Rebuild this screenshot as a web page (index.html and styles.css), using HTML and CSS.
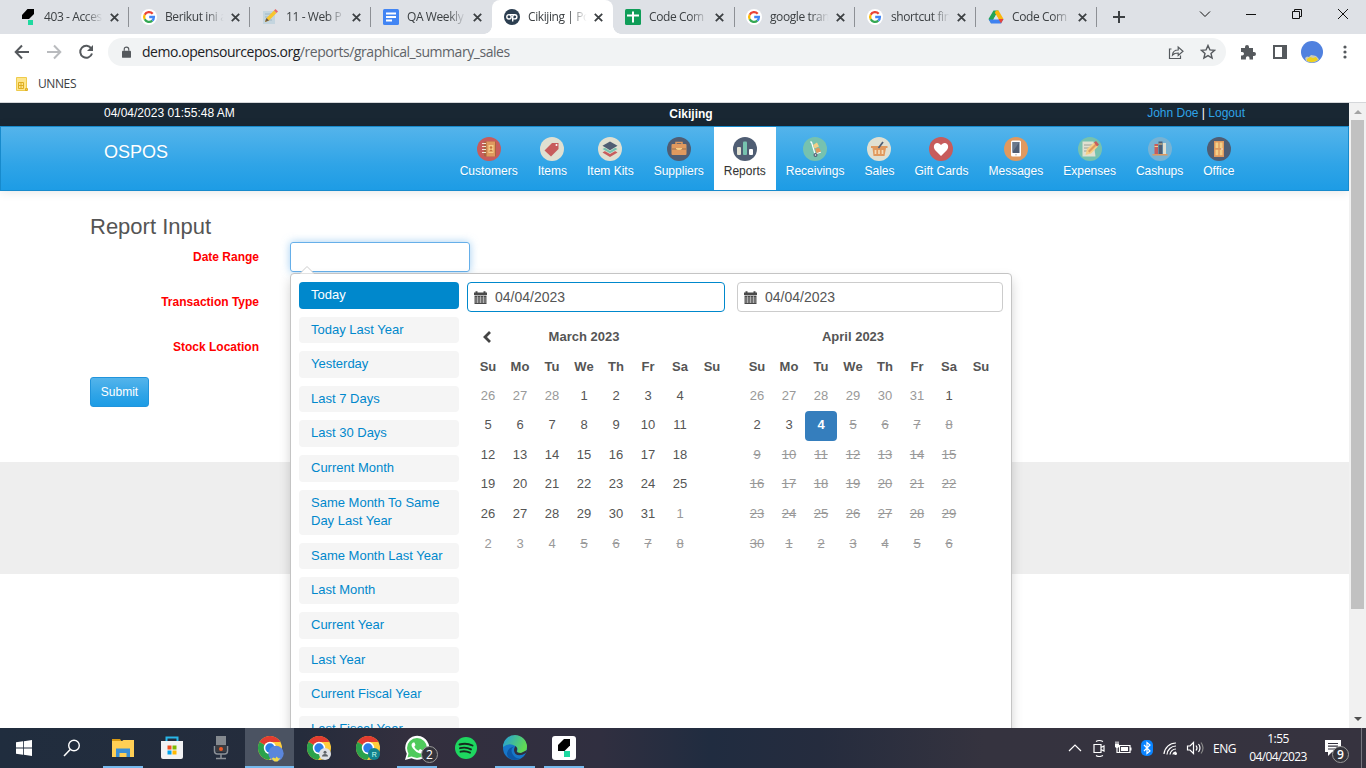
FILE: index.html
```html
<!DOCTYPE html>
<html lang="en">
<head>
<meta charset="utf-8">
<title>Cikijing | Powered by OSPOS</title>
<link rel="stylesheet" href="styles.css">
</head>
<body>
<svg class="defs" width="0" height="0">
  <symbol id="x" viewBox="0 0 9 9"><path d="M.8.8l7.4 7.4M8.200.8L.8 8.200" stroke="#3c4043" stroke-width="1.800"/></symbol>
  <symbol id="google" viewBox="0 0 16 16"><circle cx="8" cy="8" r="8" fill="#fff"/><g fill="none" stroke-width="2.3"><path d="M11.7 4.7A4.9 4.9 0 0 0 3.7 5.7" stroke="#ea4335"/><path d="M3.7 5.7a4.9 4.9 0 0 0 0 4.6" stroke="#fbbc05"/><path d="M3.7 10.3a4.9 4.9 0 0 0 7.6 1.4" stroke="#34a853"/><path d="M11.3 11.7A4.9 4.9 0 0 0 12.9 8H8.2" stroke="#4285f4"/></g></symbol>
  <symbol id="mark" viewBox="0 0 16 16"><path d="M7.500 0H14v5L9 10H2V6z" fill="#000"/><path d="M8 11h5v5H8z" fill="#1fd9a0"/></symbol>
  <symbol id="chrome" viewBox="0 0 24 24"><circle cx="12" cy="12" r="12" fill="#ffcd3c"/><path d="M12 12L1.600 6A12 12 0 0 1 22.400 6H12z" fill="#e23c30"/><path d="M1.600 6A12 12 0 0 0 11 24l6-9-5-3z" fill="#2ba24c"/><circle cx="12" cy="12" r="6.200" fill="#fff"/><circle cx="12" cy="12" r="4.700" fill="#2b7de9"/></symbol>
  <symbol id="cal" viewBox="0 0 13 13"><path d="M0 4V1.500h1.500V.3h2v1.200h6V.3h2v1.200H13V4z" fill="#4a4a4a"/><path d="M.5 4.600h12V13H.5z" fill="#4a4a4a"/><path d="M.5 7h12M.5 9h12M.5 11h12M3.500 5v7M6.500 5v7M9.500 5v7" stroke="#fff" stroke-width=".45"/></symbol>
</svg>

<header class="browser">
  <div class="tabs">
    <div class="tab"><svg class="fav"><use href="#mark"/></svg><span class="title">403 - Acces</span><svg class="close"><use href="#x"/></svg></div>
    <div class="tab"><svg class="fav"><use href="#google"/></svg><span class="title">Berikut ini a</span><svg class="close"><use href="#x"/></svg></div>
    <div class="tab"><svg class="fav" viewBox="0 0 16 16"><path d="M1 2h12v13H1z" fill="#c4d5df"/><path d="M3 5h7M3 8h6M3 11h7" stroke="#9db6c5"/><path d="M3 13l1.500-4L12 1.500l2.500 2.500L7 11.500z" fill="#f7c52e"/><path d="M12 1.500L13.500 0 16 2.500 14.500 4z" fill="#e6696b"/><path d="M3 13l1.500-4L7 11.500z" fill="#6c5944"/></svg><span class="title">11 - Web P</span><svg class="close"><use href="#x"/></svg></div>
    <div class="tab no-line"><svg class="fav" viewBox="0 0 16 16"><rect width="16" height="16" rx="1.500" fill="#4285f4"/><path d="M3 4.500h10M3 8h10M3 11.500h6" stroke="#fff" stroke-width="1.800"/></svg><span class="title">QA Weekly</span><svg class="close"><use href="#x"/></svg></div>
    <div class="tab active"><svg class="fav" viewBox="0 0 16 16"><circle cx="8" cy="8" r="8" fill="#2c3e50"/><g fill="none" stroke="#fff" stroke-width="1.400"><circle cx="5" cy="7.800" r="2.200"/><path d="M5.500 5.600h5M8.700 12.500V7.600a2.100 2.100 0 1 1 2.100 2.300H8.700"/></g></svg><span class="title">Cikijing | Po</span><svg class="close"><use href="#x"/></svg></div>
    <div class="tab no-line"><svg class="fav" viewBox="0 0 16 16"><rect width="16" height="16" rx="1.500" fill="#0f9d58"/><path d="M2 6.500h12M8 2.500v11" stroke="#fff" stroke-width="2"/></svg><span class="title">Code Com</span><svg class="close"><use href="#x"/></svg></div>
    <div class="tab left-line"><svg class="fav"><use href="#google"/></svg><span class="title">google tran</span><svg class="close"><use href="#x"/></svg></div>
    <div class="tab"><svg class="fav"><use href="#google"/></svg><span class="title">shortcut fin</span><svg class="close"><use href="#x"/></svg></div>
    <div class="tab"><svg class="fav" viewBox="0 0 16 16"><path d="M5.500 1.500h5L8 5.800 3.200 14.300.5 10z" fill="#23a455"/><path d="M10.500 1.500l5 8.500h-5L6.800 3.700 8 1.500z" fill="#fbb60b"/><path d="M3 14.500L.7 10.500H10l5.500-.5-2.500 4.500z" fill="#3f82f0"/><path d="M8 6l2.300 4H5.700z" fill="#dee1e6"/><path d="M10.500 10h5L13 14.500z" fill="#e8453c"/></svg><span class="title">Code Com</span><svg class="close"><use href="#x"/></svg></div>
    <svg class="plus" viewBox="0 0 12 12"><path d="M6 0v12M0 6h12" stroke="#3c4043" stroke-width="2"/></svg>
    <div class="window-buttons">
      <svg viewBox="0 0 12 12"><path d="M1 3.500l5 5 5-5" /></svg>
      <svg viewBox="0 0 12 12"><path d="M1 6.500h10"/></svg>
      <svg viewBox="0 0 12 12"><path d="M1.500 3.500h7v7h-7zM3.500 3.500v-2h7v7h-2"/></svg>
      <svg viewBox="0 0 12 12"><path d="M1 1l10 10M11 1L1 11"/></svg>
    </div>
  </div>
  <div class="toolbar">
    <svg viewBox="0 0 16 16"><path d="M15 8H2M8 1.500L1.700 8 8 14.500" fill="none" stroke="#55595d" stroke-width="2"/></svg>
    <svg viewBox="0 0 16 16"><path d="M1 8h13M8 1.500L14.300 8 8 14.500" fill="none" stroke="#b9bbbe" stroke-width="2"/></svg>
    <svg viewBox="0 0 16 16"><path d="M13.300 4.500A6 6 0 1 0 14 9.500" fill="none" stroke="#55595d" stroke-width="2"/><path d="M15 1v6H9z" fill="#55595d"/></svg>
    <div class="address">
      <svg class="lock" viewBox="0 0 10 13"><path d="M1 5h8q1 0 1 1v6q0 1-1 1H1q-1 0-1-1V6q0-1 1-1z" fill="#55595d"/><path d="M2.500 5V3.500a2.500 2.500 0 0 1 5 0V5" fill="none" stroke="#55595d" stroke-width="1.300"/></svg>
      <span class="url"><b>demo.opensourcepos.org</b>/reports/graphical_summary_sales</span>
      <svg class="share" viewBox="0 0 16 16"><path d="M3.500 5H1.500v9.500h11v-3M4.500 11c.3-3.500 2.500-5 5.700-5V3L15 7.300l-4.800 4.200V9C7.700 9 6 9.300 4.500 11z" fill="none" stroke="#55595d" stroke-width="1.200"/></svg>
      <svg class="star" viewBox="0 0 16 16"><path d="M8 1.500l1.900 4.400 4.700.4-3.600 3.100 1.100 4.700L8 11.600l-4.100 2.500L5 9.400 1.400 6.300l4.700-.4z" fill="none" stroke="#55595d" stroke-width="1.400"/></svg>
    </div>
    <svg class="ext" viewBox="0 0 16 16"><path d="M1 4h4V3a2 2 0 0 1 4 0v1h4v4h1a2 2 0 0 1 0 4h-1v3.500H9.500V14a1.800 1.800 0 0 0-3.600 0v1.500H1V11.500h1.200a1.800 1.800 0 0 0 0-3.600H1z" fill="#55595d"/></svg>
    <svg class="side" viewBox="0 0 14 14"><path d="M1 1h12v12H1z" fill="none" stroke="#55595d" stroke-width="2"/><path d="M9 1h4v12H9z" fill="#55595d"/></svg>
    <svg class="avatar" viewBox="0 0 22 22"><circle cx="11" cy="11" r="11" fill="#5081df"/><path d="M4 17l2-1.500 2 .5 2-2 3 .5 2 .5 2 2 1 1.500A11 11 0 0 1 5 20z" fill="#c9cbb8"/><path d="M6 18l3-2 3 1 3-1 2 3a11 11 0 0 1-11 1z" fill="#efd21b"/></svg>
    <svg class="dots" viewBox="0 0 4 14"><g fill="#55595d"><circle cx="2" cy="2" r="1.600"/><circle cx="2" cy="7" r="1.600"/><circle cx="2" cy="12" r="1.600"/></g></svg>
  </div>
  <div class="bookmarks"><svg viewBox="0 0 12 14"><path d="M.5.500h10v13H.5z" fill="#fde58c" stroke="#eecb4c"/><path d="M2.500 5.500h5v6h-5zM5 5.500v6M2.500 8.500h5M9.500 11.500h2v2h-2z" fill="none" stroke="#dfae22"/></svg><span>UNNES</span></div>
</header>

<main class="viewport">
  <div class="page">
    <div class="topbar">
      <span>04/04/2023 01:55:48 AM</span><strong>Cikijing</strong><span class="user"><a>John Doe</a> | <a>Logout</a></span>
    </div>
    <nav class="navbar">
      <span class="brand">OSPOS</span>
      <div class="menu">
        <a><svg viewBox="0 0 24 24"><circle cx="12" cy="12" r="12" fill="#c75c5c"/><rect x="7" y="4.500" width="12" height="15" rx="1" fill="#a8663e"/><path d="M9.500 4.500H18v15H9.500z" fill="#e0995e"/><path d="M5 6.500h4M5 9.500h4M5 12.500h4M5 15.500h4" stroke="#f1e3d2"/><rect x="11.500" y="8" width="5" height="8" fill="#f5cf87"/><circle cx="14" cy="10.500" r="1.300" fill="#c7753f"/><path d="M12 14.500q2-4 4 0z" fill="#c7753f"/></svg>Customers</a>
        <a><svg viewBox="0 0 24 24"><circle cx="12" cy="12" r="12" fill="#e0e0d1"/><path d="M4.500 13.500L12 6h6.500v6L11 19.500z" fill="#c75c5c"/><circle cx="16.500" cy="8" r="1" fill="#fff"/></svg>Items</a>
        <a><svg viewBox="0 0 24 24"><circle cx="12" cy="12" r="12" fill="#e0e0d1"/><path d="M4.500 15.500L12 11l7.500 4.500L12 20z" fill="#c75c5c"/><path d="M4 12.500l8-4 8 4-8 4.500z" fill="#e0e0d1"/><path d="M4.500 12L12 8l7.500 4-7.500 4.300z" fill="#76c2af"/><path d="M4 9l8-4.500L20 9l-8 5z" fill="#e0e0d1"/><path d="M4.500 8.700L12 4.500l7.500 4.200L12 13.300z" fill="#4f5d73"/></svg>Item Kits</a>
        <a><svg viewBox="0 0 24 24"><circle cx="12" cy="12" r="12" fill="#4f5d73"/><path d="M9 8V5.500h6V8" fill="none" stroke="#e0995e" stroke-width="1.500"/><rect x="4.500" y="7" width="15" height="11" rx="1" fill="#e0995e"/><path d="M5 12h5M14 12h5" stroke="#9b704f"/><path d="M9 11h6v1q-3 2-6 0z" fill="#f5cf87"/></svg>Suppliers</a>
        <a class="current"><svg viewBox="0 0 24 24"><circle cx="12" cy="12" r="12" fill="#4f5d73"/><rect x="4" y="10" width="4" height="8" rx="1" fill="#e0e0d1"/><rect x="10" y="4.500" width="4" height="13.500" rx="1" fill="#76c2af"/><rect x="16" y="12" width="4" height="6" rx="1" fill="#fff"/></svg>Reports</a>
        <a><svg viewBox="0 0 24 24"><circle cx="12" cy="12" r="12" fill="#76c2af"/><path d="M7 5h1.500l3.500 12 6-2" fill="none" stroke="#fff" stroke-width="1.200"/><path d="M10 8l4-2.500 2 4-4.500 2z" fill="#f5cf87"/><path d="M12 12l4-1.500 2 4-4.500 1.500z" fill="#e0995e"/><circle cx="12.500" cy="18" r="2" fill="#4f5d73"/><circle cx="12.500" cy="18" r=".8" fill="#fff"/></svg>Receivings</a>
        <a><svg viewBox="0 0 24 24"><circle cx="12" cy="12" r="12" fill="#e0e0d1"/><path d="M4 9h16.500v2H19l-1.500 8h-11L5.500 11H4z" fill="#e0995e"/><path d="M8.500 13v4M12 13v4M15.500 13v4" stroke="#f5ddb8" stroke-width="1.700"/><path d="M16 5l-4.500 6" stroke="#4f5d73" stroke-width="1.700"/></svg>Sales</a>
        <a><svg viewBox="0 0 24 24"><circle cx="12" cy="12" r="12" fill="#c75c5c"/><path d="M12 19L6 13q-2-3-.5-5.500Q8.500 4.500 12 8q3.500-3.500 6.500-.5Q20 10 18 13z" fill="#fff"/></svg>Gift Cards</a>
        <a><svg viewBox="0 0 24 24"><circle cx="12" cy="12" r="12" fill="#e0995e"/><rect x="7" y="3.500" width="10" height="16" rx="1.500" fill="#fff"/><path d="M8.500 5h7v11h-7z" fill="#4f5d73"/><path d="M8.500 5h7l-7 10z" fill="#6b788b"/><circle cx="12" cy="17.800" r=".7" fill="#aaa"/></svg>Messages</a>
        <a><svg viewBox="0 0 24 24"><circle cx="12" cy="12" r="12" fill="#76c2af"/><path d="M4.500 4.500h11l2 15h-13z" fill="#e0e0d1"/><path d="M6 8h8M6 11h7M6 14h5" stroke="#8b9388" stroke-width=".8"/><path d="M7.500 18l1.500-6 7-6.500 4 4-7 7z" fill="#f5cf87"/><path d="M10 14l7.500-7.500 1.500 1.500-7.500 7.500z" fill="#e0995e"/><path d="M16 5.500l2-1.500 3 3.500-2 2z" fill="#c75c5c"/></svg>Expenses</a>
        <a><svg viewBox="0 0 24 24"><circle cx="12" cy="12" r="12" fill="#77b3d4"/><path d="M4.500 17h15v1.500h-15z" fill="#e0995e"/><path d="M6.500 7H10v10H6.500z" fill="#c75c5c"/><path d="M10.500 4.500h4V17h-4z" fill="#4f5d73"/><path d="M15 6h3v11h-3z" fill="#e0e0d1"/><path d="M6.500 9.500H10M10.500 7h4" stroke="#f5cf87"/></svg>Cashups</a>
        <a><svg viewBox="0 0 24 24"><circle cx="12" cy="12" r="12" fill="#4f5d73"/><path d="M7 4h10v16H7z" fill="#e0995e"/><path d="M8.500 5.500h2.800v5.500H8.500zM12.700 5.500h2.800v5.500h-2.800zM8.500 12.700h2.800v5.500H8.500zM12.700 12.700h2.800v5.500h-2.800z" fill="#f5cf87"/><circle cx="15" cy="12" r=".8" fill="#fff"/></svg>Office</a>
      </div>
    </nav>
    <section class="content">
      <h1>Report Input</h1>
      <div class="row"><label>Date Range</label><div class="field focus"></div></div>
      <div class="row"><label>Transaction Type</label><div class="field"></div></div>
      <div class="row"><label>Stock Location</label><div class="field"></div></div>
      <button class="submit">Submit</button>
    </section>
    <div class="footer"></div>

    <div class="picker">
      <svg class="arrow" viewBox="0 0 14 8"><path d="M0 7.500L7 .5l7 7z" fill="#fff"/><path d="M0 7.500L7 .5l7 7" fill="none" stroke="#ccc"/></svg>
      <ul class="ranges">
        <li class="on">Today</li><li>Today Last Year</li><li>Yesterday</li><li>Last 7 Days</li><li>Last 30 Days</li><li>Current Month</li><li>Same Month To Same Day Last Year</li><li>Same Month Last Year</li><li>Last Month</li><li>Current Year</li><li>Last Year</li><li>Current Fiscal Year</li><li>Last Fiscal Year</li>
      </ul>
      <div class="calendar first">
        <div class="date on"><svg><use href="#cal"/></svg>04/04/2023</div>
        <div class="month">
          <div class="week head"><span><svg class="prev" viewBox="0 0 10 12"><path d="M8 1L3 6l5 5" fill="none" stroke="#444" stroke-width="2.800"/></svg></span><span class="name">March 2023</span></div>
          <div class="week head"><span>Su</span><span>Mo</span><span>Tu</span><span>We</span><span>Th</span><span>Fr</span><span>Sa</span><span>Su</span></div>
          <div class="week"><i>26</i><i>27</i><i>28</i><span>1</span><span>2</span><span>3</span><span>4</span></div>
          <div class="week"><span>5</span><span>6</span><span>7</span><span>8</span><span>9</span><span>10</span><span>11</span></div>
          <div class="week"><span>12</span><span>13</span><span>14</span><span>15</span><span>16</span><span>17</span><span>18</span></div>
          <div class="week"><span>19</span><span>20</span><span>21</span><span>22</span><span>23</span><span>24</span><span>25</span></div>
          <div class="week"><span>26</span><span>27</span><span>28</span><span>29</span><span>30</span><span>31</span><i>1</i></div>
          <div class="week"><i>2</i><i>3</i><i>4</i><s>5</s><s>6</s><s>7</s><s>8</s></div>
        </div>
      </div>
      <div class="calendar">
        <div class="date"><svg><use href="#cal"/></svg>04/04/2023</div>
        <div class="month">
          <div class="week head"><span></span><span class="name">April 2023</span></div>
          <div class="week head"><span>Su</span><span>Mo</span><span>Tu</span><span>We</span><span>Th</span><span>Fr</span><span>Sa</span><span>Su</span></div>
          <div class="week"><i>26</i><i>27</i><i>28</i><i>29</i><i>30</i><i>31</i><span>1</span></div>
          <div class="week"><span>2</span><span>3</span><b>4</b><s>5</s><s>6</s><s>7</s><s>8</s></div>
          <div class="week"><s>9</s><s>10</s><s>11</s><s>12</s><s>13</s><s>14</s><s>15</s></div>
          <div class="week"><s>16</s><s>17</s><s>18</s><s>19</s><s>20</s><s>21</s><s>22</s></div>
          <div class="week"><s>23</s><s>24</s><s>25</s><s>26</s><s>27</s><s>28</s><s>29</s></div>
          <div class="week"><s>30</s><s>1</s><s>2</s><s>3</s><s>4</s><s>5</s><s>6</s></div>
        </div>
      </div>
    </div>
  </div>
  <div class="scrollbar"><svg viewBox="0 0 8 4"><path d="M0 4l4-4 4 4z" fill="#a3a3a3"/></svg><div class="thumb"></div><svg viewBox="0 0 8 4"><path d="M0 0h8L4 4z" fill="#505050"/></svg></div>
</main>

<footer class="taskbar">
  <div class="start"><svg viewBox="0 0 16 16" width="16" height="16"><path d="M0 2.300L7 1.300v6.300H0zM7.800 1.200L16 0v7.600H7.800zM0 8.400h7v6.300l-7-1zM7.800 8.400H16V16l-8.200-1.200z" fill="#fff"/></svg></div>
  <div class="start"><svg viewBox="0 0 18 18" width="18" height="18"><circle cx="11" cy="6.500" r="5.300" fill="none" stroke="#fff" stroke-width="1.400"/><path d="M7.200 10.500L1 17" stroke="#fff" stroke-width="1.500"/></svg></div>
  <div class="apps">
    <div class="open"><svg viewBox="0 0 24 24"><path d="M1 3h8l1.500 2H1z" fill="#d89a13"/><path d="M1 5h10l1.500-1H23v17H1z" fill="#ffcf55"/><path d="M5 12.500h14V21h-3.500v-4h-7v4H5z" fill="#3a8fd6"/></svg></div>
    <div><svg viewBox="0 0 24 24"><path d="M6.500 6V1.500h11V6" fill="none" stroke="#29b6e8" stroke-width="2"/><path d="M1 5h22v16q0 2-2 2H3q-2 0-2-2z" fill="#f2f3f4"/><path d="M7.500 9.500h4v4h-4z" fill="#f25022"/><path d="M12.500 9.500h4v4h-4z" fill="#7fba00"/><path d="M7.500 14.500h4v4h-4z" fill="#00a4ef"/><path d="M12.500 14.500h4v4h-4z" fill="#ffb900"/></svg></div>
    <div><svg viewBox="0 0 24 24"><path d="M7 0h10v9H7z" fill="#84898f"/><path d="M7 9h10v7H7z" fill="#3b3d42"/><path d="M5.500 10v5q0 3 3 3h7q3 0 3-3v-5M12 18v4M7 22.500h10" fill="none" stroke="#8b9096" stroke-width="1.500"/><circle cx="12" cy="13" r="2" fill="#ef5a28"/></svg></div>
    <div class="active"><svg viewBox="0 0 24 24"><use href="#chrome"/><circle cx="18" cy="17.500" r="7.700" fill="#5a86dc"/><path d="M13.500 22.500l2-1 2 1 1-2 2 2 2-.5-3 3.500h-3z" fill="#f0d94a"/></svg></div>
    <div><svg viewBox="0 0 24 24"><use href="#chrome"/><circle cx="18" cy="18" r="6" fill="#dfe1e5"/><circle cx="18" cy="16.300" r="1.500" fill="#5f6368"/><path d="M15 20.500q0-2.500 3-2.500t3 2.500z" fill="#5f6368"/></svg></div>
    <div><svg viewBox="0 0 24 24"><use href="#chrome"/><circle cx="18" cy="18" r="6" fill="#12828e"/><text x="15.800" y="20.500" font-size="7" fill="#cfe" font-family="Liberation Sans">R</text></svg></div>
    <div class="open"><svg viewBox="0 0 24 24"><path d="M0 24l1.800-6.300A12 12 0 1 1 6.500 22.300z" fill="#fff"/><circle cx="12" cy="12" r="10" fill="#4fca5c"/><path d="M2.500 21.500l1.500-6 4.500 4.500z" fill="#4fca5c"/><path d="M8 6.500q-3 2 0 6t7 5q3-.5 3-3l-3-1.500-1.500 1.700q-3-1-4.200-4L10.500 9 9.500 6.500z" fill="#fff"/></svg><span class="count">2</span></div>
    <div><svg viewBox="0 0 24 24"><circle cx="12" cy="12" r="11" fill="#1ed760"/><path d="M5.500 8.500q7-2 13 1M6 12.200q6-1.500 11 1.200M6.500 15.700q5-1.200 9.500 1" fill="none" stroke="#152c1e" stroke-width="1.900" stroke-linecap="round"/></svg></div>
    <div class="open"><svg viewBox="0 0 24 24"><defs><linearGradient id="e" x2="1" y2=".4"><stop stop-color="#229bdf"/><stop offset="1" stop-color="#61db53"/></linearGradient></defs><circle cx="12" cy="12" r="12" fill="#1777c9"/><path d="M0 11A12 12 0 0 1 24 11q0 6-7 6-4 0-2.500-3 .5-2-2-4Q6 6 0 11z" fill="url(#e)"/><path d="M12.500 10q-6 2-3 8 3 5 8 4.500Q10 26 5 21q-4-8 7.500-11z" fill="#0d57a5"/><path d="M12.500 10q-3 4 0 8 4 3 10.500-1l1-3-6 3q-5.500 0-4-3 1-2-1.500-4z" fill="#302f40"/></svg></div>
    <div class="open"><svg viewBox="0 0 24 24"><rect width="24" height="24" rx="3" fill="#fff"/><path d="M12 3h6v6.500L12.500 15H6V9z" fill="#000"/><path d="M12 15h6v6h-6z" fill="#1fd9a0"/></svg></div>
  </div>
  <div class="tray">
    <svg viewBox="0 0 18 18"><path d="M3 12l6-6 6 6"/></svg>
    <svg viewBox="0 0 18 18"><path d="M4 5.500h7v8H4zM11 8.500l3-1.500v5l-3-1.500M6 2.500q3-2 7 0M6 16.500q3 2 7 0"/></svg>
    <svg viewBox="0 0 18 18"><path d="M5.500 6.500H16v7H5.500z"/><path d="M7 8h7v4H7zM16 8.500h1.500v3H16zM1 5h4v3q-2 2-4 0z" fill="#fff" stroke="none"/><path d="M2 2.500V5M4 2.500V5M3 8v5.500h3"/></svg>
    <svg viewBox="0 0 18 18"><rect x="3" y="1" width="12" height="16" rx="5" fill="#0a84ff" stroke="none"/><path d="M6 6l6 6-3 2.500v-11L12 6l-6 6"/></svg>
    <svg viewBox="0 0 18 18" class="wifi"><path d="M2 15A12 12 0 0 1 14 4M5 15.500a9 9 0 0 1 9-8.500M8 15.500a6 6 0 0 1 6-5.500M11 15.500a3 3 0 0 1 3-2.500"/><circle cx="13.500" cy="14.500" r="1.500" fill="#fff" stroke="none"/></svg>
    <svg viewBox="0 0 18 18"><path d="M1.500 7h2.500l3.500-3.500v11L4 11H1.500zM10 6.500q2 2.500 0 5M12.500 5q3 4 0 8"/><path d="M15 3.500q4 5.500 0 11" stroke="#888"/></svg>
    <span class="lang">ENG</span>
    <div class="clock"><span>1:55</span><span>04/04/2023</span></div>
    <div class="notice"><svg viewBox="0 0 18 18"><path d="M1 1h16v12H8l-4 4v-4H1z" fill="#fff" stroke="none"/><path d="M4 4.500h10M4 7.200h10M4 10h7" stroke="#34323f"/></svg><span class="count">9</span></div>
  </div>
</footer>
</body>
</html>
```

FILE: styles.css
```css
* { box-sizing: border-box; }
body { margin: 0; width: 1366px; height: 768px; overflow: hidden; background: #fff; font-family: "Liberation Sans", Arial, sans-serif; }
svg { flex: none; display: block; }
.defs { position: absolute; }

/* Browser chrome */
.browser { height: 103px; border-bottom: 1px solid #d5d7da; font-family: "Open Sans", "Noto Sans", sans-serif; }
.tabs { display: flex; height: 34px; background: #dee1e6; padding-left: 8px; }
.tab { position: relative; display: flex; align-items: center; width: 121px; padding-left: 12px; }
.tab:not(.active):not(.no-line)::after { content: ""; position: absolute; right: 0; top: 7px; height: 20px; width: 1px; background: #8d9095; }
.left-line { box-shadow: none; }
.left-line::before { content: ""; position: absolute; left: 0; top: 7px; height: 20px; width: 1px; background: #8d9095; }
.tab.active { background: #fff; border-radius: 8px 8px 0 0; }
.tab.active::before, .tab.active::after { content: ""; position: absolute; bottom: 0; width: 8px; height: 8px; }
.tab.active::before { left: -8px; background: radial-gradient(circle at 0 0, #dee1e6 7.500px, #fff 8px); }
.tab.active::after { right: -8px; background: radial-gradient(circle at 100% 0, #dee1e6 7.500px, #fff 8px); }
.fav { width: 16px; height: 16px; }
.title { margin-left: 8px; width: 60px; overflow: hidden; white-space: nowrap; font-size: 12px; letter-spacing: -.4px; line-height: 18px; color: #3c4043; -webkit-mask-image: linear-gradient(90deg, #000 68%, transparent 98%); }
.close { width: 9px; height: 9px; margin-left: 6px; }
.plus { width: 12px; height: 12px; margin: 11px 0 0 16px; }
.window-buttons { display: flex; gap: 34px; margin: 8px 0 0 74px; }
.window-buttons svg { width: 12px; height: 12px; fill: none; stroke: #111; stroke-width: 1; }
.toolbar { display: flex; align-items: center; height: 36px; padding-left: 14px; }
.toolbar > svg { width: 16px; height: 16px; margin-right: 16px; }
.address { display: flex; align-items: center; width: 1118px; height: 28px; margin: 0 14px 0 -2px; padding: 0 10px 0 14px; border-radius: 14px; background: #f1f3f4; }
.lock { width: 9px; height: 12px; }
.url { flex: 1; margin-left: 11px; font-size: 14px; letter-spacing: -.46px; line-height: 20px; padding-bottom: 1px; color: #5f6368; white-space: nowrap; }
.url b { font-weight: 400; color: #202124; }
.share { width: 16px; height: 16px; margin-right: 16px; }
.star { width: 16px; height: 16px; }
.toolbar > .ext { margin-right: 17px; }
.toolbar > .side { width: 14px; height: 14px; margin-right: 14px; }
.toolbar > .avatar { width: 22px; height: 22px; margin-right: 20px; }
.toolbar > .dots { width: 4px; height: 14px; margin: 0; }
.bookmarks { display: flex; align-items: center; height: 28px; padding-left: 16px; gap: 10px; font-size: 12px; letter-spacing: -.4px; color: #3c4043; }
.bookmarks svg { width: 12px; height: 14px; }
.bookmarks span { padding-bottom: 2px; }

/* Page */
.viewport { display: flex; height: 625px; overflow: hidden; }
.page { position: relative; width: 1349px; height: 625px; overflow: hidden; }
.topbar { display: grid; grid-template-columns: 1fr auto 1fr; height: 23px; padding: 0 104px; background: #192733; color: #fff; font-size: 12px; line-height: 20px; }
.topbar strong { line-height: 22px; padding-left: 33px; }
.user { text-align: right; }
.user a { color: #2fa4e7; }
.navbar { display: flex; justify-content: space-between; height: 65px; padding: 0 103.600px 0 103px; border: 1px solid #178acc; background: linear-gradient(#54b4eb, #2fa4e7 60%, #1d9ce5); box-shadow: 0 1px 10px rgba(0,0,0,.1); color: #fff; text-shadow: 0 1px 0 rgba(0,0,0,.1); }
.brand { font-size: 18px; line-height: 51px; }
.menu { display: flex; }
.menu a { display: flex; flex-direction: column; align-items: center; padding: 10px 10px 0; font-size: 12px; line-height: 20px; white-space: nowrap; }
.menu svg { width: 24px; height: 24px; }
.menu .current { background: #fff; color: #333; }
.content { height: 271px; padding: 21px 0 0 90px; }
.content h1 { margin: 0; height: 30px; font-size: 22px; font-weight: 400; line-height: 30px; color: #555; }
.row { display: flex; height: 45px; }
.row label { width: 169px; line-height: 30px; text-align: right; font-size: 12px; font-weight: 700; color: #f00; }
.field { width: 180px; height: 30px; margin-left: 31px; border: 1px solid #aaa; border-radius: 3px; }
.field.focus { border-color: #66afe9; box-shadow: 0 0 8px rgba(102,175,233,.6); }
.submit { display: block; width: 59px; height: 30px; padding: 0; border: 1px solid #2194dc; border-radius: 3px; background: linear-gradient(#54b4eb, #2fa4e7 60%, #1d9ce5); color: #fff; font: 12px/28px "Liberation Sans", sans-serif; }
.footer { height: 112px; background: #eee; }

/* Date range dropdown floats over the form */
.picker { position: absolute; left: 290px; top: 170px; display: flex; width: 722px; height: 560px; padding: 8px; border: 1px solid #c4c4c4; border-radius: 4px; background: #fff; box-shadow: 0 6px 12px rgba(0,0,0,.175); }
.arrow { position: absolute; left: 9px; top: -8px; width: 14px; height: 8px; }
.ranges { width: 160px; margin: 0; padding: 0; list-style: none; }
.ranges li { margin-bottom: 8px; padding: 4px 12px; border-radius: 4px; background: #f5f5f5; color: #08c; font-size: 13px; line-height: 18.600px; }
.ranges .on { background: #08c; color: #fff; }
.calendar { width: 266px; margin-left: 12px; }
.calendar.first { width: 258px; margin-left: 8px; }
.date { display: flex; align-items: center; gap: 8px; height: 30px; padding-left: 6px; border: 1px solid #ccc; border-radius: 4px; font-size: 14px; color: #555; }
.date.on { border-color: #08c; }
.date svg { width: 13px; height: 13px; }
.month { padding: 10.500px 0 0 4px; color: #555; }
.first .month { padding-left: 5px; }
.week { display: flex; height: 29.600px; font-size: 13px; line-height: 28.800px; }
.week > * { flex: none; width: 32px; text-align: center; font-style: normal; }
.week .name { width: 160px; }
.head { font-weight: 700; line-height: 28px; }
.head + .head { line-height: 29.400px; }
.week i, .week s { color: #999; }
.week b { border-radius: 4px; background: #357ebd; color: #fff; }
.prev { width: 10px; height: 12px; margin: 8px 0 0 10px; }

.scrollbar { display: flex; flex-direction: column; align-items: center; width: 17px; background: #f1f1f1; padding: 7px 0; }
.scrollbar svg { width: 8px; height: 4px; }
.thumb { width: 13px; height: 489px; margin: 6px 0 auto; background: #c1c1c1; }

/* Taskbar */
.taskbar { display: flex; height: 40px; background: linear-gradient(90deg, #202d3e, #252c3c 22%, #332f3e 30%, #302f40 44%, #202c40 52%, #252c3e 60%, #35333f 72%, #36333f); color: #fff; font-family: "Open Sans", "Noto Sans", sans-serif; }
.start { display: grid; place-items: center; width: 48px; }
.apps { display: flex; margin-left: 2px; }
.apps > div { position: relative; display: grid; place-items: center; width: 49px; }
.apps svg { width: 24px; height: 24px; overflow: visible; }
.open::after, .apps .active::after { content: ""; position: absolute; left: 5px; right: 4px; bottom: 0; height: 2px; background: #76b9ed; }
.apps .active { background: #4b5362; }
.apps .active::after { left: 0; right: 0; }
.count { position: absolute; display: grid; place-items: center; width: 17px; height: 17px; border: 1px solid #999; border-radius: 50%; background: #34343c; font-size: 12px; line-height: 14px; }
.apps .count { left: 29px; top: 18px; }
.tray { display: flex; align-items: center; flex: 1; justify-content: flex-end; padding-right: 4px; }
.tray svg { width: 18px; height: 18px; margin-right: 6px; fill: none; stroke: #fff; stroke-width: 1.200; }
.lang { width: 24px; margin-left: 3px; font-size: 12px; letter-spacing: -.5px; white-space: nowrap; }
.clock { display: grid; justify-items: center; width: 60px; margin-left: 11px; font-size: 12px; line-height: 18px; letter-spacing: -.6px; white-space: nowrap; }
.notice { position: relative; width: 37px; height: 40px; margin-left: 17px; padding-top: 11px; border-right: 1px solid #77757e; }
.notice svg { margin-left: -1px; }
.notice .count { left: 7px; top: 18px; font-weight: 600; }
```
